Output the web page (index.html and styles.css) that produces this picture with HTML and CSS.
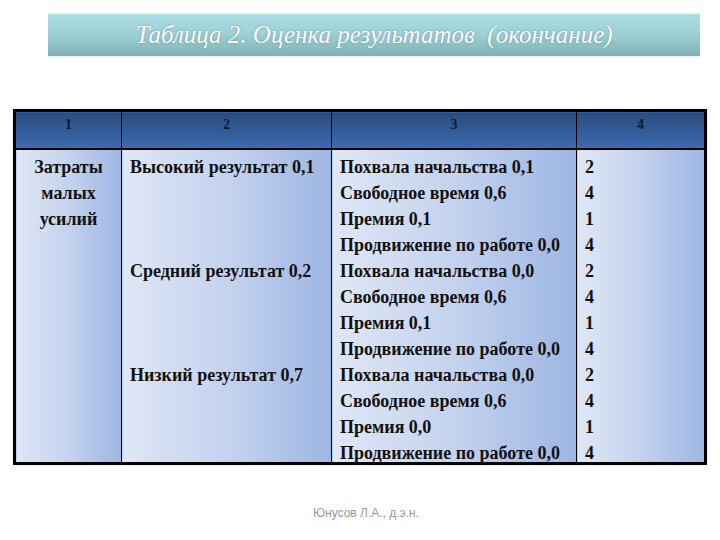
FILE: index.html
```html
<!DOCTYPE html>
<html lang="ru">
<head>
<meta charset="utf-8">
<title>Таблица 2</title>
<link rel="stylesheet" href="styles.css">
</head>
<body>
<div class="page">
  <div class="title-bar">
    <h1 class="title">Таблица 2. Оценка результатов&nbsp; (окончание)</h1>
  </div>
  <table class="grid">
    <colgroup>
      <col class="c1"><col class="c2"><col class="c3"><col class="c4">
    </colgroup>
    <thead>
      <tr><th>1</th><th>2</th><th>3</th><th>4</th></tr>
    </thead>
    <tbody>
      <tr>
        <td class="center">
          <div class="line">Затраты</div>
          <div class="line">малых</div>
          <div class="line">усилий</div>
        </td>
        <td>
          <div class="block"><div class="line">Высокий результат 0,1</div></div>
          <div class="block"><div class="line">Средний результат 0,2</div></div>
          <div class="block"><div class="line">Низкий результат 0,7</div></div>
        </td>
        <td>
          <div class="line">Похвала начальства 0,1</div>
          <div class="line">Свободное время 0,6</div>
          <div class="line">Премия 0,1</div>
          <div class="line">Продвижение по работе 0,0</div>
          <div class="line">Похвала начальства 0,0</div>
          <div class="line">Свободное время 0,6</div>
          <div class="line">Премия 0,1</div>
          <div class="line">Продвижение по работе 0,0</div>
          <div class="line">Похвала начальства 0,0</div>
          <div class="line">Свободное время 0,6</div>
          <div class="line">Премия 0,0</div>
          <div class="line">Продвижение по работе 0,0</div>
        </td>
        <td>
          <div class="line">2</div><div class="line">4</div><div class="line">1</div><div class="line">4</div>
          <div class="line">2</div><div class="line">4</div><div class="line">1</div><div class="line">4</div>
          <div class="line">2</div><div class="line">4</div><div class="line">1</div><div class="line">4</div>
        </td>
      </tr>
    </tbody>
  </table>
  <p class="footer">Юнусов Л.А., д.э.н.</p>
</div>
</body>
</html>
```
FILE: styles.css
```css
html, body {
  margin: 0;
  padding: 0;
  background: #ffffff;
}

.page {
  width: 720px;
  height: 540px;
  font-family: "Liberation Serif", "DejaVu Serif", serif;
  display: flex;
  flex-direction: column;
}

.title-bar {
  margin: 14px 20px 0 48px;
  height: 42px;
  background: linear-gradient(to bottom, #acdfe3 0%, #9ccfd3 50%, #7fb1b5 100%);
  box-shadow: 0 -2px 0 #f2f6f6, 0 2px 0 #eef4f4;
  display: flex;
  align-items: center;
  justify-content: center;
}

.title {
  margin: 0;
  font-family: "Liberation Serif", "DejaVu Serif", serif;
  font-style: italic;
  font-weight: normal;
  font-size: 25px;
  color: #ffffff;
  text-shadow: 0 0 2px rgba(70, 110, 115, 0.6);
}

.grid {
  margin: 53px 0 0 13px;
  width: 694px;
  border-collapse: collapse;
  border: 3px solid #000000;
  table-layout: fixed;
  box-shadow: 0 0 3px rgba(200, 200, 200, 0.5);
  font-family: "Liberation Serif", "DejaVu Serif", serif;
}

.c1 { width: 107px; }
.c2 { width: 210px; }
.c3 { width: 245px; }
.c4 { width: 129px; }

.grid th {
  height: 36px;
  padding: 0;
  vertical-align: top;
  border: 1px solid #000000;
  border-bottom: 2px solid #000000;
  background: linear-gradient(to bottom, #2c4a7c 0%, #325d9a 55%, #3b6db2 100%);
  color: #0f1a30;
  font-size: 14px;
  font-weight: bold;
  line-height: 26px;
}

.grid td {
  padding: 0 8px;
  vertical-align: top;
  border: 1px solid #000000;
  background: linear-gradient(to right, #dfe7f5 0%, #c4d2ee 50%, #9db6e2 100%);
  font-size: 18px;
  font-weight: bold;
  color: #111111;
}

.grid td.center {
  text-align: center;
}

.line {
  height: 26px;
  line-height: 34px;
  white-space: nowrap;
}

.block {
  height: 104px;
}

.footer {
  margin: 41px 0 0 0;
  text-align: center;
  font-family: "Liberation Sans", Arial, sans-serif;
  font-size: 12px;
  color: #999999;
  padding-left: 12px;
}
```
